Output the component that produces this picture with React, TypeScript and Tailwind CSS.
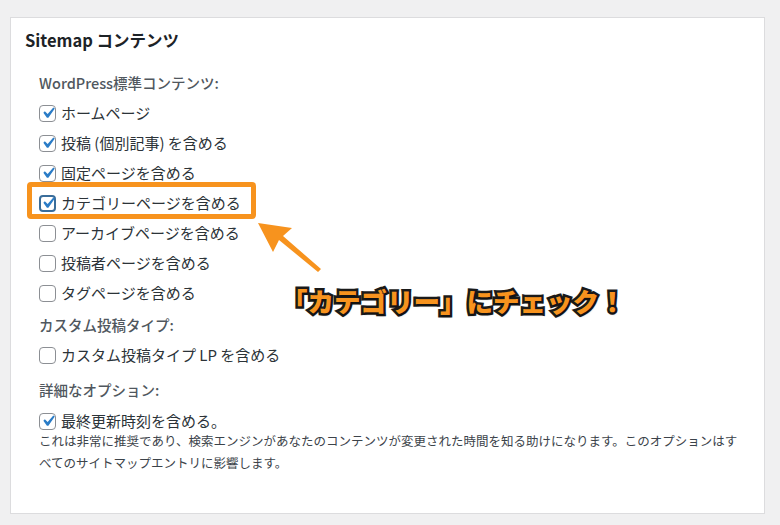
import React from "react";

const font = { fontFamily: '"Noto Sans CJK JP", "Noto Sans", sans-serif' };

function CheckBox({ checked, focused }: { checked?: boolean; focused?: boolean }) {
  return (
    <span
      className={`relative flex h-[17px] w-[17px] shrink-0 items-center justify-center rounded-[4px] bg-white ${
        focused ? "border-2 border-[#3a6d9a]" : "border border-[#8c8f94]"
      }`}
    >
      {checked && (
        <svg viewBox="0 0 20 20" className="absolute h-[22px] w-[22px]" fill="#2a7cc7">
          <path d="M14.83 4.89l1.34.94-5.81 8.38H9.02L5.78 9.67l1.34-1.25 2.57 2.4z" />
        </svg>
      )}
    </span>
  );
}

function Row({ label, checked, focused }: { label: string; checked?: boolean; focused?: boolean }) {
  return (
    <div className="flex h-[30px] items-center gap-[5px] text-[15px] text-[#2c3338]">
      <CheckBox checked={checked} focused={focused} />
      <span>{label}</span>
    </div>
  );
}

export default function App() {
  return (
    <div className="relative h-[525px] w-[780px] overflow-hidden bg-[#f0f0f1] pl-[10px] pr-[15px] pt-[17px]" style={font}>
      {/* Panel */}
      <div className="h-[497px] border border-[#dcdcde] bg-white pl-[14px] pt-[12px]">
        <h2 className="text-[16.5px] font-semibold leading-[20px] text-[#1d2327]">Sitemap コンテンツ</h2>

        <div className="mt-[18px] pl-[14px]">
          <div className="flex h-[30px] items-center text-[14.5px] font-medium text-[#50575e]">WordPress標準コンテンツ:</div>
          <Row label="ホームページ" checked />
          <Row label="投稿 (個別記事) を含める" checked />
          <Row label="固定ページを含める" checked />
          <Row label="カテゴリーページを含める" checked focused />
          <Row label="アーカイブページを含める" />
          <Row label="投稿者ページを含める" />
          <Row label="タグページを含める" />

          <div className="mt-[2px] flex h-[30px] items-center text-[14.5px] font-medium text-[#50575e]">カスタム投稿タイプ:</div>
          <Row label="カスタム投稿タイプ LP を含める" />

          <div className="mt-[5px] flex h-[30px] items-center text-[14.5px] font-medium text-[#50575e]">詳細なオプション:</div>
          <div className="mt-[3px] flex h-[26px] items-center gap-[5px] text-[15px] text-[#2c3338]">
            <CheckBox checked />
            <span>最終更新時刻を含める。</span>
          </div>
          <p className="-mt-[4px] whitespace-nowrap text-[12.5px] leading-[22px] text-[#3c434a]">
            これは非常に推奨であり、検索エンジンがあなたのコンテンツが変更された時間を知る助けになります。このオプションはす
            <br />
            べてのサイトマップエントリに影響します。
          </p>
        </div>
      </div>

      {/* Highlight box */}
      <div className="absolute left-[27px] top-[182px] h-[37px] w-[229px] rounded-[4px] border-[5px] border-[#f7931e]" />

      {/* Arrow */}
      <svg className="absolute left-0 top-0" width="780" height="525" viewBox="0 0 780 525">
        <polygon points="258,223 292,228 283,236 321,269 318,272 279,240 273,252" fill="#f7931e" />
      </svg>

      {/* Callout text */}
      <div className="absolute left-[281px] top-[284px] whitespace-nowrap text-[26.5px] font-black leading-[33px] text-[#f7931e] [-webkit-text-stroke:5px_#1a1a1a] [paint-order:stroke_fill] [text-shadow:1px_2px_2px_rgba(0,0,0,0.35)]">
        「カテゴリー」にチェック！
      </div>
    </div>
  );
}
